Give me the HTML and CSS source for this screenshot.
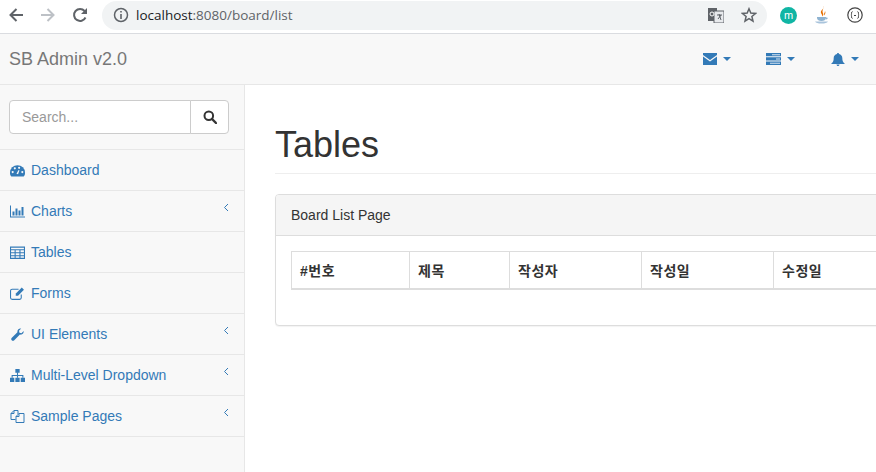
FILE: index.html
```html
<!DOCTYPE html>
<html lang="ko">
<head>
  <meta charset="UTF-8">
  <title>SB Admin v2.0</title>
  <link rel="stylesheet" href="styles.css">
</head>
<body>
  <!-- browser toolbar -->
  <div class="chrome">
    <svg class="chrome-btn" viewBox="0 0 16 16"><path d="M15 8H2.500M8.500 2L2.500 8l6 6" fill="none" stroke="#5f6368" stroke-width="2"/></svg>
    <svg class="chrome-btn" viewBox="0 0 16 16"><path d="M1 8h12.500M7.500 2l6 6-6 6" fill="none" stroke="#bdc1c6" stroke-width="2"/></svg>
    <svg class="chrome-btn" viewBox="0 0 16 16"><path d="M13.500 10.500A6 6 0 1 1 12.600 4" fill="none" stroke="#5f6368" stroke-width="2"/><path d="M15 1v6H9z" fill="#5f6368"/></svg>
    <div class="omnibox">
      <svg class="info" viewBox="0 0 16 16"><circle cx="8" cy="8" r="6.500" fill="none" stroke="#5f6368" stroke-width="1.500"/><path d="M7.200 7h1.600v5H7.200zM7.200 4h1.600v1.600H7.200z" fill="#5f6368"/></svg>
      <span class="url"><b>localhost</b>:8080/board/list</span>
      <svg class="translate" viewBox="0 0 16 16"><path d="M0 1h9v13H0z" fill="#5f6368"/><path d="M6 4h10v12H6z" fill="#e8eaed" stroke="#5f6368"/><circle cx="4" cy="7" r="2" fill="none" stroke="#fff"/><path d="M9 8h5M11 7l2 6M13 8l-3 4" stroke="#5f6368" fill="none"/></svg>
      <svg class="star" viewBox="0 0 16 16"><path d="M8 1.800l1.800 4.300 4.700.4-3.600 3 1.100 4.600L8 11.700l-4 2.400 1.100-4.600-3.600-3 4.700-.4z" fill="none" stroke="#5f6368" stroke-width="1.500"/></svg>
    </div>
    <span class="ext-m">m</span>
    <svg class="ext-java" viewBox="0 0 14 18"><path d="M8 0c2 3-3 4-2 7 .4 1.200 1.500 1.800 1.200 3.500C9.500 8.500 7.500 7 7.500 5.200 7.500 3.500 9 2.500 8 0z" fill="#e76f00"/><path d="M10 5c0 2-1.500 2.500-1 4.500C10 8 11 7 10 5z" fill="#e76f00"/><path d="M2 11h9v1c0 2-2 3-4.500 3S2 14 2 12zM11 11.500c2-.5 2.500 1.500 0 2z" fill="#8fb3d1"/><path d="M0 15.500h13c-1 1.500-3 2-6.500 2S1 17 0 15.500z" fill="#a9c4dc"/></svg>
    <svg class="ext-code" viewBox="0 0 16 16"><circle cx="8" cy="8" r="7.200" fill="none" stroke="#444" stroke-width="1.200"/><path d="M5.500 4.500c-1.500 0-.5 3.500-1.500 3.500 1 0 0 3.500 1.500 3.500M10.500 4.500c1.500 0 .5 3.500 1.500 3.500-1 0 0 3.500-1.500 3.500M7 8.500h2" fill="none" stroke="#444"/></svg>
  </div>

  <nav class="topbar">
    <a class="brand">SB Admin v2.0</a>
    <div class="top-links">
      <a class="top-link">
        <svg class="top-icon" viewBox="0 0 14 12"><path d="M0 0h14v2L7 7 0 2zM0 3.500L7 8.500l7-5V12H0z" fill="#337ab7"/></svg>
        <i class="caret"></i>
      </a>
      <a class="top-link">
        <svg class="top-icon wide" viewBox="0 0 15 12"><path d="M0 0h15v3.300H0zM0 4.300h15v3.300H0zM0 8.600h15V12H0z" fill="#337ab7"/><path d="M6 1.300h8v1H6zM10 5.500h4v1h-4zM4 9.800h10v1H4z" fill="#d5e4f1"/></svg>
        <i class="caret"></i>
      </a>
      <a class="top-link">
        <svg class="top-icon tall" viewBox="0 0 14 13"><path d="M7 0c.6 0 1 .4 1 1 2 .4 3.300 2 3.300 4 0 3 .7 4.500 2.700 6H0c2-1.500 2.700-3 2.700-6 0-2 1.300-3.600 3.300-4 0-.6.400-1 1-1zM5.500 11.500h3C8.500 12.400 7.800 13 7 13s-1.500-.6-1.500-1.500z" fill="#337ab7"/></svg>
        <i class="caret"></i>
      </a>
    </div>
  </nav>

  <div class="layout">
    <aside class="sidebar">
      <div class="search-row">
        <div class="search">
          <input class="search-input" type="text" placeholder="Search...">
          <button class="search-btn">
            <svg viewBox="0 0 14 14" width="14" height="14"><circle cx="5.800" cy="5.800" r="4.300" fill="none" stroke="#333" stroke-width="2"/><path d="M9 9l4 4" stroke="#333" stroke-width="2.400" stroke-linecap="round"/></svg>
          </button>
        </div>
      </div>
      <ul class="menu">
        <li class="menu-item">
          <svg class="menu-icon" viewBox="0 0 14 12"><path d="M7 1a7 7 0 0 0-7 7c0 1.500.4 2.800 1.200 3.500h11.600C13.600 10.800 14 9.500 14 8a7 7 0 0 0-7-7z" fill="#337ab7"/><g fill="#f8f8f8"><circle cx="2.500" cy="7.500" r="1"/><circle cx="4.500" cy="4" r="1"/><circle cx="8.500" cy="3.500" r="1"/><circle cx="11.500" cy="7.500" r="1"/><path d="M6 9l2-3.500.8.400L7.500 9.500z"/></g></svg>
          Dashboard
        </li>
        <li class="menu-item">
          <svg class="menu-icon" viewBox="0 0 15 12"><path d="M0 0h1v11h15v1H0z" fill="#337ab7"/><path d="M2.500 6h2v4h-2zM5.500 3h2v7h-2zM8.500 5h2v5h-2zM11.500 1.500h2V10h-2z" fill="#337ab7"/></svg>
          Charts
          <svg class="arrow" viewBox="0 0 6 9"><path d="M5 1L1.500 4.500 5 8" fill="none" stroke="#337ab7"/></svg>
        </li>
        <li class="menu-item">
          <svg class="menu-icon" viewBox="0 0 14 12"><path d="M.5 1h13v10.500H.500zM0 3.500h14M0 6.300h14M0 9h14M4.800 3v8.500M9.300 3v8.500" fill="none" stroke="#337ab7"/></svg>
          Tables
        </li>
        <li class="menu-item">
          <svg class="menu-icon" viewBox="0 0 14 12"><path d="M10.500 7v3a1.500 1.500 0 0 1-1.500 1.500H2A1.500 1.500 0 0 1 .5 10V3.500A1.500 1.500 0 0 1 2 2h6" fill="none" stroke="#337ab7"/><path d="M5.500 6l5.500-5.500 2 2L7.500 8l-2.200.2z" fill="#337ab7"/></svg>
          Forms
        </li>
        <li class="menu-item">
          <svg class="menu-icon" viewBox="0 0 14 14"><path d="M13.600 3.200c.5 2-1.300 4.500-4 3.900L3.500 13.200c-.8.800-2 .8-2.700 0-.8-.8-.7-1.900.1-2.700l6-6C6.400 2 8.800.1 11 .6L8.600 3l.5 2.200 2.200.5z" fill="#337ab7"/></svg>
          UI Elements
          <svg class="arrow" viewBox="0 0 6 9"><path d="M5 1L1.500 4.500 5 8" fill="none" stroke="#337ab7"/></svg>
        </li>
        <li class="menu-item">
          <svg class="menu-icon" viewBox="0 0 14 12"><path d="M5 0h4v3.500H5zM0 8h4v4H0zM5 8h4v4H5zM10 8h4v4h-4z" fill="#337ab7"/><path d="M7 3v3M2 8V6h10v2M7 6v2" fill="none" stroke="#337ab7"/></svg>
          Multi-Level Dropdown
          <svg class="arrow" viewBox="0 0 6 9"><path d="M5 1L1.500 4.500 5 8" fill="none" stroke="#337ab7"/></svg>
        </li>
        <li class="menu-item">
          <svg class="menu-icon" viewBox="0 0 14 13"><path d="M5 9.500H.5V3.500L3.500.5h4v3.500M3.500.5v3H.5" fill="none" stroke="#337ab7"/><path d="M5.500 6.500l3-3h5v9h-8zM8.500 3.500v3h-3" fill="none" stroke="#337ab7"/></svg>
          Sample Pages
          <svg class="arrow" viewBox="0 0 6 9"><path d="M5 1L1.500 4.500 5 8" fill="none" stroke="#337ab7"/></svg>
        </li>
      </ul>
    </aside>

    <main class="content">
      <h1 class="page-title">Tables</h1>
      <section class="panel">
        <div class="panel-head">Board List Page</div>
        <div class="panel-body">
          <table class="board">
            <thead>
              <tr>
                <th class="col-no">#번호</th>
                <th class="col-title">제목</th>
                <th class="col-date">작성자</th>
                <th class="col-date">작성일</th>
                <th class="col-last">수정일</th>
              </tr>
            </thead>
          </table>
        </div>
      </section>
    </main>
  </div>
</body>
</html>
```

FILE: styles.css
```css
* {
  box-sizing: border-box;
}
html, body {
  height: 100%;
}
body {
  margin: 0;
  width: 876px;
  height: 472px;
  overflow: hidden;
  display: flex;
  flex-direction: column;
  font-family: "Liberation Sans", Arial, sans-serif;
  font-size: 14px;
  color: #333;
  background: #fff;
}

/* browser toolbar */
.chrome {
  height: 34px;
  flex: none;
  display: flex;
  align-items: center;
  padding: 0 0 3px 8px;
  border-bottom: 1px solid #dadce0;
  background: #fff;
}
.chrome-btn {
  width: 16px;
  height: 16px;
  margin-right: 16px;
}
.omnibox {
  width: 665px;
  height: 29px;
  margin-left: -2px;
  display: flex;
  align-items: center;
  padding: 0 10px 0 11px;
  border-radius: 15px;
  background: #f1f3f4;
}
.info {
  width: 16px;
  height: 16px;
  margin-right: 7px;
}
.url {
  flex: 1;
  font-family: "Open Sans", sans-serif;
  font-size: 13.500px;
  color: #5f6368;
}
.url b {
  font-weight: 400;
  color: #202124;
}
.translate {
  width: 16px;
  height: 16px;
  margin-right: 17px;
}
.star {
  width: 16px;
  height: 16px;
}
.ext-m {
  width: 17px;
  height: 17px;
  margin-left: 13px;
  border-radius: 50%;
  background: #10b5a4;
  color: #fff;
  font-size: 11px;
  line-height: 16px;
  text-align: center;
}
.ext-java {
  width: 14px;
  height: 18px;
  margin-left: 18px;
}
.ext-code {
  width: 16px;
  height: 16px;
  margin-left: 18px;
}

/* navbar */
.topbar {
  height: 51px;
  flex: none;
  display: flex;
  align-items: center;
  justify-content: space-between;
  padding: 0 17px 0 9px;
  border-bottom: 1px solid #e7e7e7;
  background: #f8f8f8;
}
.brand {
  font-size: 18px;
  color: #777;
}
.top-links {
  display: flex;
  gap: 35px;
}
.top-link {
  display: flex;
  align-items: center;
  gap: 6px;
}
.top-link:last-child {
  margin-left: 1px;
}
.top-icon {
  width: 14px;
  height: 12px;
}
.top-icon.wide {
  width: 15px;
}
.top-icon.tall {
  height: 13px;
}
.caret {
  width: 0;
  height: 0;
  border-top: 4px solid #337ab7;
  border-left: 4px solid transparent;
  border-right: 4px solid transparent;
}

/* sidebar */
.layout {
  flex: 1;
  display: flex;
  min-height: 0;
}
.sidebar {
  width: 245px;
  flex: none;
  border-right: 1px solid #e7e7e7;
  background: #f8f8f8;
}
.search-row {
  height: 65px;
  padding: 15px 15px 15px 9px;
  border-bottom: 1px solid #e7e7e7;
}
.search {
  display: flex;
  height: 34px;
  width: 220px;
}
.search-input {
  flex: 1;
  min-width: 0;
  padding: 6px 12px;
  border: 1px solid #ccc;
  border-radius: 4px 0 0 4px;
  font-family: inherit;
  font-size: 14px;
  color: #555;
  background: #fff;
}
.search-input::placeholder {
  color: #999;
}
.search-btn {
  width: 39px;
  margin-left: -1px;
  padding: 3px 0 0;
  border: 1px solid #ccc;
  border-radius: 0 4px 4px 0;
  background: #fff;
}
.menu {
  margin: 0;
  padding: 0;
  list-style: none;
}
.menu-item {
  height: 41px;
  display: flex;
  align-items: center;
  padding: 0 15px 0 10px;
  border-bottom: 1px solid #e7e7e7;
  color: #337ab7;
}
.menu-icon {
  width: 15px;
  height: 13px;
  margin-right: 6px;
}
.arrow {
  width: 6px;
  height: 9px;
  margin: -7px 0 0 auto;
}

/* page content */
.content {
  flex: 1;
  min-width: 0;
  overflow: hidden;
  padding: 0 0 0 30px;
  background: #fff;
}
.page-title {
  width: 1000px;
  margin: 40px 0 20px;
  padding-bottom: 8px;
  border-bottom: 1px solid #eee;
  font-size: 36px;
  font-weight: 500;
  line-height: 40px;
  color: #333;
}
.panel {
  width: 1000px;
  border: 1px solid #ddd;
  border-radius: 4px;
  box-shadow: 0 1px 1px rgba(0,0,0,.05);
  background: #fff;
}
.panel-head {
  height: 41px;
  padding: 12px 15px 0;
  border-bottom: 1px solid #ddd;
  border-radius: 3px 3px 0 0;
  background: #f5f5f5;
}
.panel-body {
  padding: 15px;
}
.board {
  width: 968px;
  table-layout: fixed;
  border-collapse: collapse;
  margin-bottom: 20px;
}
.board th {
  height: 37px;
  padding: 8px;
  border: 1px solid #ddd;
  border-bottom-width: 2px;
  font-family: "Liberation Sans", "Noto Sans CJK KR", sans-serif;
  font-weight: 700;
  letter-spacing: .5px;
  text-align: left;
  color: #333;
}
.col-no {
  width: 118px;
}
.col-title {
  width: 100px;
}
.col-date {
  width: 132px;
}
.col-last {
  width: 486px;
}
```
